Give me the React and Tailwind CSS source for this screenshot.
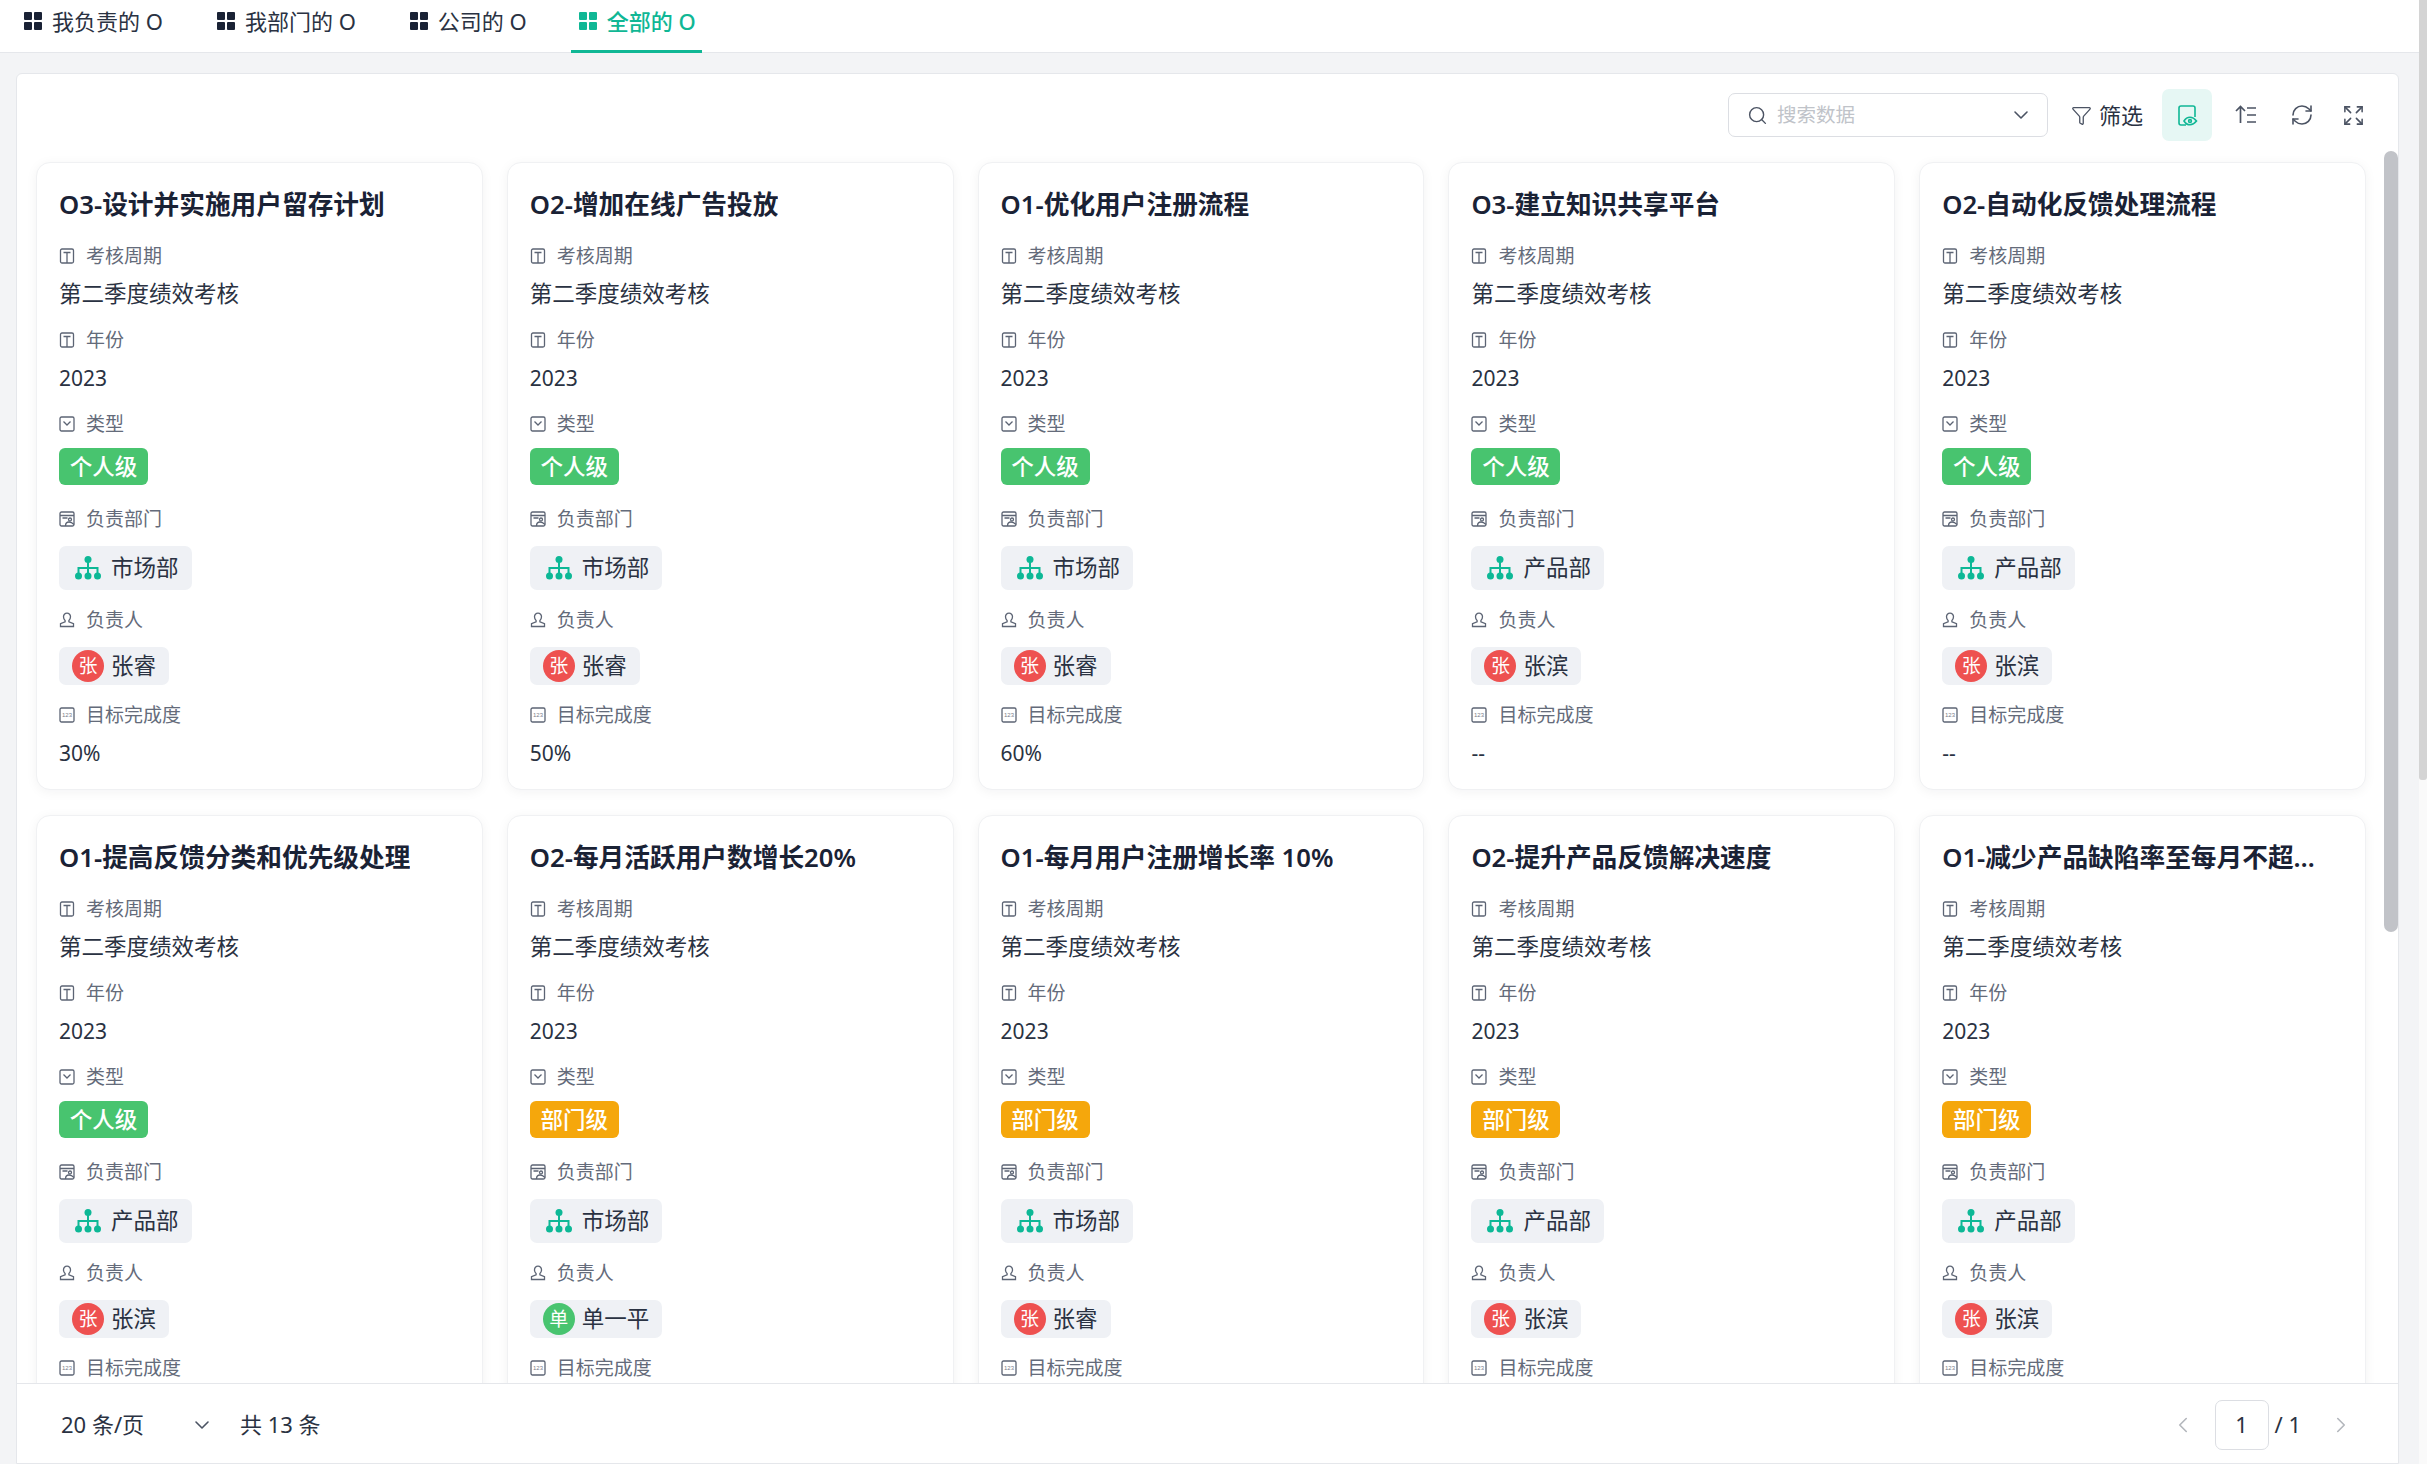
import { ChevronDown, ChevronLeft, ChevronRight, Expand, Funnel, RefreshCw, Search } from "lucide-react";

const tabs = [
    { label: "我负责的 O" },
    { label: "我部门的 O" },
    { label: "公司的 O" },
    { label: "全部的 O", active: true },
];

const cards = [
    { title: "O3-设计并实施用户留存计划", level: "个人级", dept: "市场部", owner: "张睿", progress: "30%" },
    { title: "O2-增加在线广告投放", level: "个人级", dept: "市场部", owner: "张睿", progress: "50%" },
    { title: "O1-优化用户注册流程", level: "个人级", dept: "市场部", owner: "张睿", progress: "60%" },
    { title: "O3-建立知识共享平台", level: "个人级", dept: "产品部", owner: "张滨", progress: "--" },
    { title: "O2-自动化反馈处理流程", level: "个人级", dept: "产品部", owner: "张滨", progress: "--" },
    { title: "O1-提高反馈分类和优先级处理", level: "个人级", dept: "产品部", owner: "张滨", progress: "--" },
    { title: "O2-每月活跃用户数增长20%", level: "部门级", dept: "市场部", owner: "单一平", progress: "--" },
    { title: "O1-每月用户注册增长率 10%", level: "部门级", dept: "市场部", owner: "张睿", progress: "--" },
    { title: "O2-提升产品反馈解决速度", level: "部门级", dept: "产品部", owner: "张滨", progress: "--" },
    { title: "O1-减少产品缺陷率至每月不超过5个", level: "部门级", dept: "产品部", owner: "张滨", progress: "--" },
];

function GridIcon({ active }) {
    const color = active ? "bg-[#10b795]" : "bg-[#1a2235]";
    return (
        <span className="grid grid-cols-2 gap-[2px] w-[18px] h-[18px]">
            <i className={`${color} rounded-[1px]`} />
            <i className={`${color} rounded-[1px]`} />
            <i className={`${color} rounded-[1px]`} />
            <i className={`${color} rounded-[1px]`} />
        </span>
    );
}

function TextIcon() {
    return (
        <svg width="16" height="16" viewBox="0 0 16 16" fill="none" stroke="#5c6474" strokeWidth="1.3">
            <rect x="1.500" y="1" width="13" height="14" rx="1.500" />
            <path d="M4.500 4.500h7M8 4.500v10.500" />
        </svg>
    );
}

function SelectIcon() {
    return (
        <svg width="16" height="16" viewBox="0 0 16 16" fill="none" stroke="#5c6474" strokeWidth="1.3">
            <rect x="1" y="1" width="14" height="14" rx="1.500" />
            <path d="M4.500 5.500l3.500 3.500 3.500-3.500" />
        </svg>
    );
}

function DeptIcon() {
    return (
        <svg width="16" height="16" viewBox="0 0 16 16" fill="none" stroke="#5c6474" strokeWidth="1.3">
            <rect x="1" y="1" width="14" height="14" rx="1.500" />
            <path d="M1 4.500h14M3.500 7h5M6.500 15c0-2.500 1.500-4 3.500-4s3.500 1 5 2.500" />
            <circle cx="11" cy="8.500" r="1.500" />
        </svg>
    );
}

function UserIcon() {
    return (
        <svg width="16" height="16" viewBox="0 0 16 16" fill="none" stroke="#5c6474" strokeWidth="1.3">
            <path d="M8 1.200c-2.100 0-3.500 1.500-3.500 3.600 0 1.600.6 2.900 1.600 3.700v1.300L1.500 11.700V14.500h13V11.700L9.900 9.800V8.500c1-.8 1.600-2.100 1.600-3.700 0-2.100-1.400-3.600-3.500-3.600z" />
        </svg>
    );
}

function NumberIcon() {
    return (
        <svg width="16" height="16" viewBox="0 0 16 16" fill="none">
            <rect x="1" y="1" width="14" height="14" rx="1.500" stroke="#5c6474" strokeWidth="1.300" />
            <text x="8" y="10.300" textAnchor="middle" fontSize="6" fill="#7a808c" fontFamily="Liberation Sans, sans-serif">123</text>
        </svg>
    );
}

function OrgIcon() {
    return (
        <svg width="26" height="24" viewBox="0 0 26 24" fill="#0db896" stroke="none" className="shrink-0">
            <circle cx="13" cy="3.500" r="3.500" />
            <circle cx="3.500" cy="20" r="3.500" />
            <circle cx="13" cy="20" r="3.500" />
            <circle cx="22.500" cy="20" r="3.500" />
            <path d="M12 5h2v6h9.500v6h-2v-4H14v4h-2v-4H4.500v4h-2v-6H12z" />
        </svg>
    );
}

function CardViewIcon() {
    return (
        <svg width="21" height="21" viewBox="0 0 21 21" fill="none" stroke="#10b795" strokeWidth="1.600">
            <path d="M9 20H4a2 2 0 0 1-2-2V3a2 2 0 0 1 2-2h12a2 2 0 0 1 2 2v9" />
            <path d="M7 16c1.500-2.500 3.500-3.800 6-3.800s4.500 1.300 6.500 3.800c-2 2.500-4 3.800-6.500 3.800S8.500 18.500 7 16z" fill="#e6f7f4" />
            <circle cx="13" cy="16" r="1.400" />
        </svg>
    );
}

function SortIcon() {
    return (
        <svg width="22" height="20" viewBox="0 0 22 20" fill="none" stroke="#4b5363" strokeWidth="1.700">
            <path d="M1 6l4.500-4.500L10 6M5.500 2v16M12 3h9M12 10h9M12 17h9" />
        </svg>
    );
}

function Field({ icon, label, children }) {
    return (
        <div>
            <div className="flex items-center h-[26px] text-[19px] text-[#646b7a]">
                <span className="w-[27px] flex items-center shrink-0">{icon}</span>
                {label}
            </div>
            {children}
        </div>
    );
}

function Card({ card }) {
    const isPersonal = card.level === "个人级";
    const isShan = card.owner === "单一平";
    return (
        <div className="h-[628px] shrink-0 bg-white rounded-[14px] border border-[#f0f1f3] shadow-[0_2px_12px_rgba(17,24,39,0.05)] pl-[22px] pr-[24px] pt-[24px] text-[#2a3242]">
            <div className="h-[36px] mb-[20px] pr-[10px] flex items-center text-[25.700px] leading-[36px] font-semibold text-[#1a2235]">
                <span className="truncate">{card.title}</span>
            </div>
            <Field icon={<TextIcon />} label="考核周期">
                <div className="h-[34px] mt-2 mb-4 text-[22.500px] leading-[34px]">第二季度绩效考核</div>
            </Field>
            <Field icon={<TextIcon />} label="年份">
                <div className="h-[34px] mt-2 mb-[16px] text-[21px] leading-[34px]">2023</div>
            </Field>
            <Field icon={<SelectIcon />} label="类型">
                <div className={`w-[89px] h-[37px] mt-[11px] mb-[21px] rounded-[6px] flex items-center justify-center text-white text-[22.500px] font-medium ${isPersonal ? "bg-[#48c46f]" : "bg-[#f5a70c]"}`}>
                    {card.level}
                </div>
            </Field>
            <Field icon={<DeptIcon />} label="负责部门">
                <div className="w-fit h-[44px] mt-[14px] mb-[17px] pl-[16px] pr-[13px] gap-[10px] rounded-[7px] bg-[#eff1f5] flex items-center text-[22.500px]">
                    <OrgIcon />
                    {card.dept}
                </div>
            </Field>
            <Field icon={<UserIcon />} label="负责人">
                <div className="w-fit h-[38px] mt-[14px] mb-[17px] pl-[13px] pr-[13px] gap-[7px] rounded-[7px] bg-[#eff1f5] flex items-center text-[22.500px]">
                    <span className={`w-[32px] h-[32px] rounded-full text-white text-[19px] flex items-center justify-center ${isShan ? "bg-[#48c46f]" : "bg-[#ee5150]"}`}>
                        {card.owner[0]}
                    </span>
                    {card.owner}
                </div>
            </Field>
            <Field icon={<NumberIcon />} label="目标完成度">
                <div className="h-[34px] mt-2 text-[21px] leading-[34px]">{card.progress}</div>
            </Field>
        </div>
    );
}

export default function App() {
    return (
        <div className="w-[2427px] h-[1464px] overflow-hidden flex bg-[#f3f4f6] font-['Noto_Sans','Noto_Sans_CJK_SC',sans-serif] text-[#1f2937]">
            <div className="flex-1 min-w-0 flex flex-col">
                <div className="h-[53px] shrink-0 bg-white border-b border-[#e5e7eb] flex gap-[38px] pl-4">
                    {tabs.map((tab) => (
                        <div
                            key={tab.label}
                            className={`h-[53px] pl-2 pb-[8px] flex items-center gap-[10px] text-[22px] border-b-[3px] ${tab.active ? "-ml-[2px] pr-[6px] border-[#10b795] text-[#10b795] font-medium" : "pr-2 border-transparent text-[#2a3242]"}`}
                        >
                            <GridIcon active={tab.active} />
                            <span>{tab.label}</span>
                        </div>
                    ))}
                </div>

                <div className="flex-1 min-h-0 flex pt-5 pl-4 pr-5">
                    <div className="flex-1 min-w-0 flex flex-col bg-white border border-[#e5e7eb] rounded-t-[6px]">
                        <div className="h-[76px] shrink-0 flex items-start justify-end pt-[15px] pr-[33px]">
                            <div className="w-[320px] h-[44px] mt-[4px] mr-[23px] pl-[18px] pr-[14px] rounded-[7px] border border-[#dcdee3] flex items-center">
                                <Search size={21} strokeWidth={1.600} className="text-[#4b5363] mr-[9px]" />
                                <span className="flex-1 text-[19.500px] text-[#c0c3c9]">搜索数据</span>
                                <ChevronDown size={24} strokeWidth={1.600} className="text-[#4b5363]" />
                            </div>
                            <div className="h-[52px] flex items-center gap-[7px] text-[22px] text-[#2a3242] mr-[19px]">
                                <Funnel size={21} strokeWidth={1.500} className="text-[#4b5363]" />
                                筛选
                            </div>
                            <div className="w-[50px] h-[52px] mr-[23px] rounded-[7px] bg-[#e6f7f4] flex items-center justify-center">
                                <CardViewIcon />
                            </div>
                            <div className="h-[52px] flex items-center text-[#4b5363]">
                                <SortIcon />
                                <RefreshCw size={24} strokeWidth={1.600} className="ml-[33px] mr-[28px]" />
                                <Expand size={23} strokeWidth={1.600} />
                            </div>
                        </div>

                        <div className="relative flex-1 min-h-0 overflow-hidden pt-[12px] pl-[19px] pr-[32px]">
                            <div className="grid grid-cols-5 gap-x-[24px] gap-y-[25px]">
                                {cards.map((card) => (
                                    <Card key={card.title} card={card} />
                                ))}
                            </div>
                            <div className="absolute right-0 top-[1px] w-[14px] h-[781px] rounded-full bg-[#c1c3c8]" />
                        </div>

                        <div className="h-[80px] shrink-0 border-t border-[#e5e7eb] pt-[2px] flex items-center pl-[44px] pr-[44px] text-[22px] text-[#2a3242]">
                            <span className="w-[129px]">20 条/页</span>
                            <ChevronDown size={24} strokeWidth={1.600} className="text-[#4b5363] mr-[26px]" />
                            <span>共 13 条</span>
                            <div className="ml-auto flex items-center">
                                <ChevronLeft size={26} strokeWidth={1.500} className="text-[#b4b7bd] mr-[19px]" />
                                <div className="w-[54px] h-[50px] rounded-[7px] border border-[#dcdee3] flex items-center justify-center">1</div>
                                <span className="ml-[6px] mr-[27px]">/ 1</span>
                                <ChevronRight size={26} strokeWidth={1.500} className="text-[#b4b7bd]" />
                            </div>
                        </div>
                    </div>
                </div>
            </div>
            <div className="w-2 shrink-0 bg-[#fafafa]">
                <div className="h-[780px] rounded-b-[3px] bg-[#d4d4d4]" />
            </div>
        </div>
    );
}
